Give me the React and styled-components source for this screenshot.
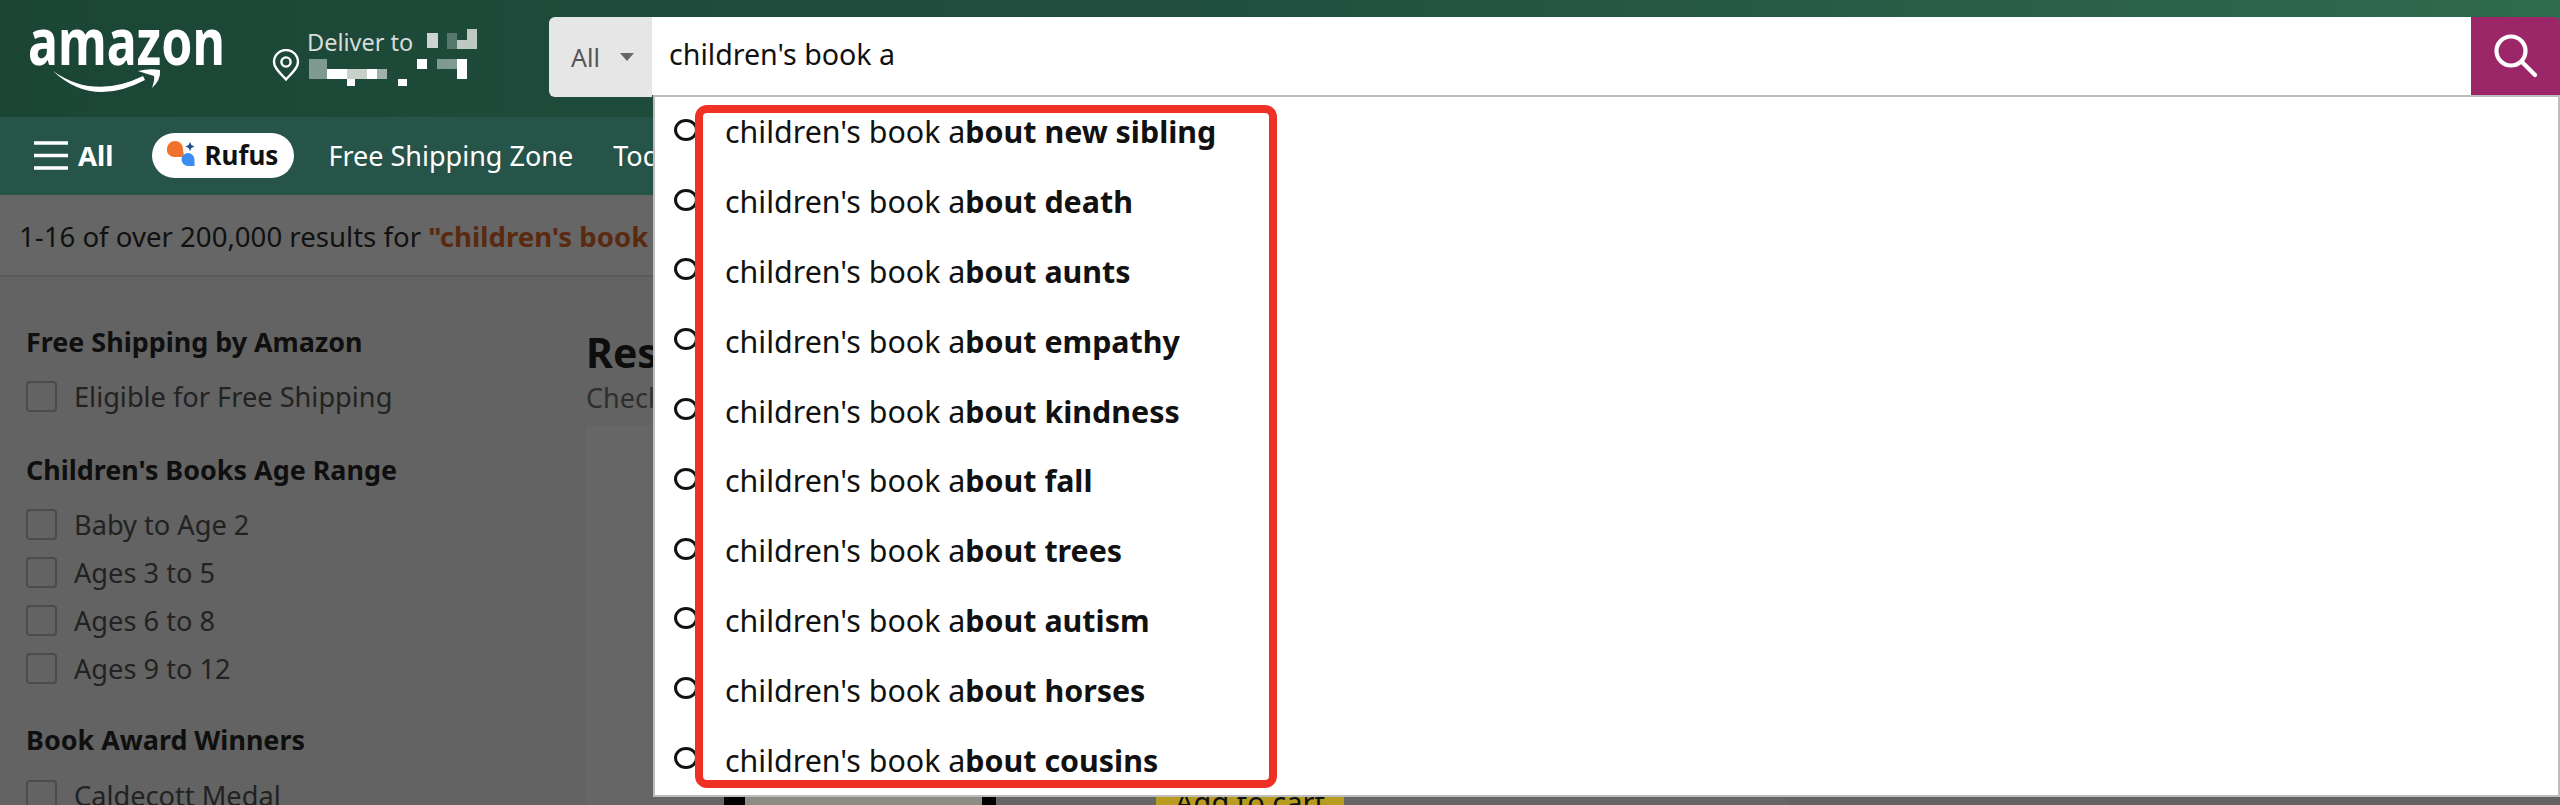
import styled, { createGlobalStyle } from 'styled-components';

const GlobalStyle = createGlobalStyle`
  html, body {
    margin: 0;
    padding: 0;
    height: 805px;
    overflow: hidden;
    background: #636363;
    font-family: "Noto Sans", "Liberation Sans", sans-serif;
  }
  * { box-sizing: border-box; }
`;

const Page = styled.div`
  position: relative;
  width: 2560px;
  height: 805px;
  overflow: hidden;
`;
const TopBar = styled.header`
  display: flex;
  align-items: flex-start;
  height: 117px;
  padding: 17px 0 0 31px;
  background: linear-gradient(90deg, #1b4636 0%, #225040 50%, #2f6b4d 100%);
`;
const LogoBox = styled.div`
  width: 192px;
  height: 80px;
  flex: none;
`;
const Deliver = styled.div`
  display: flex;
  width: 326px;
  flex: none;
  padding-left: 49px;
  color: #d5dcd9;
  font-size: 23.5px;
  line-height: 30px;
`;
const Pin = styled.svg`
  margin-top: 32px;
  flex: none;
`;
const DeliverText = styled.div`
  position: relative;
  margin: 10px 0 0 7px;
  white-space: nowrap;
`;
const Mosaic = styled.svg`
  position: absolute;
  top: -2px;
  left: -5px;
`;
const Search = styled.div`
  display: flex;
  align-items: flex-start;
  flex: 1;
`;
const Scope = styled.div`
  display: flex;
  align-items: center;
  gap: 20px;
  width: 103px;
  height: 80px;
  padding-left: 22px;
  border-radius: 6px 0 0 6px;
  background: #e6e6e6;
  color: #555;
  font-size: 25px;
`;
const Caret = styled.span`
  border: 7px solid transparent;
  border-top: 8px solid #666;
  border-bottom: 0;
`;
const Field = styled.div`
  flex: 1;
  height: 78px;
  padding: 19px 0 0 17px;
  background: #fff;
  color: #111;
  font-size: 28.6px;
  line-height: 36px;
`;
const SearchBtn = styled.div`
  display: flex;
  align-items: center;
  justify-content: center;
  width: 89px;
  height: 78px;
  border-radius: 0 6px 0 0;
  background: #9b2768;
`;
const NavBar = styled.nav`
  display: flex;
  align-items: center;
  height: 78px;
  padding: 0 0 2px 34px;
  background: #265449;
  color: #fff;
  font-size: 27px;
  white-space: nowrap;
`;
const AllLink = styled.div`
  display: flex;
  align-items: center;
  gap: 10px;
  margin-right: 39px;
  font-size: 27.5px;
  font-weight: 700;
`;
const Rufus = styled.div`
  display: flex;
  align-items: center;
  gap: 9px;
  width: 142px;
  height: 45px;
  margin-right: 34px;
  padding-left: 15px;
  border-radius: 23px;
  background: #fff;
  color: #111;
  font-weight: 700;
  font-size: 26px;
`;
const NavLink = styled.div`
  margin-right: 40px;
`;
const ResultBar = styled.div`
  height: 82px;
  padding: 23px 0 0 19px;
  border-bottom: 2px solid #5a5a5a;
  background: #666;
  color: #111;
  font-size: 27.6px;
  line-height: 36px;
  white-space: nowrap;
`;
const Keyword = styled.b`
  color: #5a2a10;
`;
const Main = styled.div`
  display: flex;
  height: 528px;
  overflow: hidden;
  background: #636363;
`;
const Sidebar = styled.aside`
  width: 586px;
  padding: 47px 0 0 26px;
  flex: none;
`;
const FilterTitle = styled.h4`
  margin: ${(p) => p.$top || 0}px 0 ${(p) => p.$bottom || 0}px;
  color: #0f0f0f;
  font-size: 26.9px;
  line-height: 36px;
  font-weight: 700;
`;
const FilterRow = styled.div`
  display: flex;
  align-items: center;
  height: 48px;
  gap: 17px;
  color: #222;
  font-size: 27.2px;
  white-space: nowrap;
`;
const Box = styled.span`
  width: 31px;
  height: 31px;
  flex: none;
  border: 2px solid #4c4c4c;
  border-radius: 4px;
`;
const Results = styled.section`
  flex: 1;
  padding-top: 51px;
  white-space: nowrap;
`;
const ResultsTitle = styled.h2`
  margin: 0 0 4px;
  color: #0d0d0d;
  font-size: 41px;
  line-height: 48px;
  font-weight: 700;
`;
const ResultsSub = styled.div`
  color: #2e2e2e;
  font-size: 27px;
  line-height: 36px;
`;
const Card = styled.div`
  display: flex;
  align-items: flex-start;
  width: 1200px;
  height: 500px;
  margin-top: 10px;
  padding: 344px 0 0 138px;
  background: #666;
`;
const Thumb = styled.div`
  display: flex;
  width: 272px;
  height: 60px;
  padding: 0 14px 0 21px;
  flex: none;
  background: #000;
`;
const AddButton = styled.div`
  width: 188px;
  height: 56px;
  margin: 0 0 0 160px;
  padding-top: 4px;
  background: #b79c21;
  color: #111;
  font-size: 29px;
  line-height: 56px;
  text-align: center;
`;
const Dropdown = styled.div`
  position: absolute;
  top: 95px;
  left: 653px;
  width: 1907px;
  height: 702px;
  border: 2px solid #bdbdbd;
  background: #fff;
`;
const Suggestion = styled.div`
  display: flex;
  align-items: center;
  height: 69.8px;
  padding-left: 19px;
  color: #111;
  font-size: 30.4px;
`;
const Ring = styled.span`
  width: 24px;
  height: 22px;
  margin-top: -4px;
  flex: none;
  border: 3px solid #111;
  border-radius: 50%;
`;
const SuggestionText = styled.span`
  margin-left: 27px;
`;
const Highlight = styled.div`
  position: absolute;
  top: 105px;
  left: 695px;
  width: 582px;
  height: 683px;
  border: 8px solid #ee3124;
  border-radius: 12px;
`;

const suggestions = ['new sibling', 'death', 'aunts', 'empathy', 'kindness', 'fall', 'trees', 'autism', 'horses', 'cousins'];
const ages = ['Baby to Age 2', 'Ages 3 to 5', 'Ages 6 to 8', 'Ages 9 to 12'];

function Logo() {
  return (
    <LogoBox>
      <svg width="192" height="80" viewBox="31 17 192 80" overflow="visible">
        <text x="28" y="65" fill="#fff" fontFamily="Noto Sans" fontWeight="700" fontSize="64" textLength="197" lengthAdjust="spacingAndGlyphs">amazon</text>
        <path d="M53 71Q94 100 143 76L145 80Q92 108 53 71Z" fill="#fff" />
        <path d="M138 71Q150 68 160 70Q161 80 152 88Q155 79 154 76Q147 74 138 71Z" fill="#fff" />
      </svg>
    </LogoBox>
  );
}

// the blurred-out address in the screenshot
function AddressMosaic() {
  const blocks = [
    [425, 33, 11, 15, '#cdd3d0'], [445, 33, 10, 16, '#56776c'], [455, 40, 20, 9, '#c0c8c4'], [465, 29, 10, 11, '#c0c8c4'],
    [307, 59, 18, 20, '#7f9a91'], [325, 69, 20, 10, '#fff'], [345, 69, 20, 10, '#c8d0cc'], [365, 69, 10, 10, '#fff'],
    [375, 69, 10, 10, '#9fb0aa'], [345, 79, 8, 7, '#fff'], [396, 79, 9, 7, '#fff'], [415, 59, 10, 10, '#fff'],
    [435, 59, 20, 10, '#7f9a91'], [455, 59, 10, 20, '#fff'],
  ];
  return (
    <Mosaic width="180" height="65" viewBox="300 25 180 65">
      {blocks.map(([x, y, w, h, c]) => (
        <rect key={`${x}-${y}`} x={x} y={y} width={w} height={h} fill={c} />
      ))}
    </Mosaic>
  );
}

export default function App() {
  return (
    <Page>
      <GlobalStyle />
      <TopBar>
        <Logo />
        <Deliver>
          <Pin width="28" height="32" viewBox="0 0 28 32" fill="none" stroke="#fff" strokeWidth="2.4">
            <path d="M14 30.5C8 24 2 19 2 13a12 12 0 0 1 24 0c0 6-6 11-12 17.5z" />
            <circle cx="14" cy="13" r="4.6" />
          </Pin>
          <DeliverText>
            Deliver to
            <AddressMosaic />
          </DeliverText>
        </Deliver>
        <Search>
          <Scope>All<Caret /></Scope>
          <Field>children's book a</Field>
          <SearchBtn>
            <svg width="44" height="44" viewBox="0 0 44 44" fill="none" stroke="#fff" strokeWidth="4.2" strokeLinecap="round">
              <circle cx="17" cy="17" r="14.5" />
              <path d="M28 28l13 13" />
            </svg>
          </SearchBtn>
        </Search>
      </TopBar>
      <NavBar>
        <AllLink>
          <svg width="34" height="29" viewBox="0 0 34 29" stroke="#fff" strokeWidth="3.6">
            <path d="M0 2h34M0 14.5h34M0 27h34" />
          </svg>
          All
        </AllLink>
        <Rufus>
          <svg width="28" height="30" viewBox="0 0 28 30">
            <path d="M0 9a8 8 0 0 1 16 0c0 3 1 5 1 8H7a7 7 0 0 1-7-8z" fill="#f0712c" />
            <path d="M21 13a6.5 6.5 0 0 1 6.5 6.5V26H21a6.5 6.5 0 0 1 0-13z" fill="#3d8df0" />
            <path d="M23 2l1.4 3 3 1.5-3 1.5-1.4 3-1.4-3-3-1.5 3-1.5z" fill="#1f4f8f" />
          </svg>
          Rufus
        </Rufus>
        <NavLink>Free Shipping Zone</NavLink>
        <NavLink>Today's Deals</NavLink>
      </NavBar>
      <ResultBar>
        1-16 of over 200,000 results for <Keyword>"children's book a"</Keyword>
      </ResultBar>
      <Main>
        <Sidebar>
          <FilterTitle $bottom={12}>Free Shipping by Amazon</FilterTitle>
          <FilterRow><Box />Eligible for Free Shipping</FilterRow>
          <FilterTitle $top={32} $bottom={12}>Children's Books Age Range</FilterTitle>
          {ages.map((a) => (
            <FilterRow key={a}><Box />{a}</FilterRow>
          ))}
          <FilterTitle $top={30} $bottom={13}>Book Award Winners</FilterTitle>
          <FilterRow><Box />Caldecott Medal</FilterRow>
        </Sidebar>
        <Results>
          <ResultsTitle>Results</ResultsTitle>
          <ResultsSub>Check each product page for other buying options.</ResultsSub>
          <Card>
            <Thumb>
              <svg width="237" height="60" viewBox="0 0 237 60">
                <rect width="237" height="60" fill="#8e8d84" />
                <path d="M50 0l-8 9M78 0l10 9M92 0v9M104 0l3 9M118 0l6 9M130 0l-4 9" stroke="#20242c" strokeWidth="4" />
                <path d="M140 0l6 9M160 0v8M190 2h10" stroke="#a79a4c" strokeWidth="3" />
              </svg>
            </Thumb>
            <AddButton>Add to cart</AddButton>
          </Card>
        </Results>
      </Main>
      <Dropdown>
        {suggestions.map((s) => (
          <Suggestion key={s}>
            <Ring />
            <SuggestionText>children's book a<b>bout {s}</b></SuggestionText>
          </Suggestion>
        ))}
      </Dropdown>
      <Highlight />
    </Page>
  );
}
